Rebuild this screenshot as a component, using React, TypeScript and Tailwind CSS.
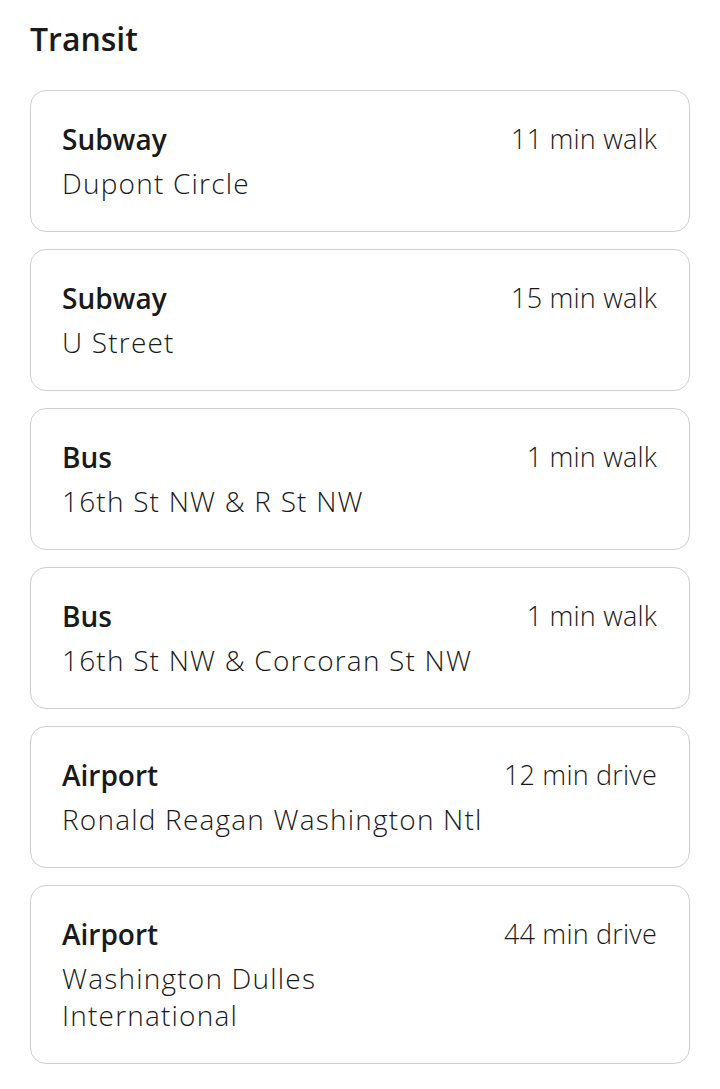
import React from "react";

const items = [
  { type: "Subway", name: "Dupont Circle", time: "11 min walk" },
  { type: "Subway", name: "U Street", time: "15 min walk" },
  { type: "Bus", name: "16th St NW & R St NW", time: "1 min walk" },
  { type: "Bus", name: "16th St NW & Corcoran St NW", time: "1 min walk" },
  { type: "Airport", name: "Ronald Reagan Washington Ntl", time: "12 min drive" },
  { type: "Airport", name: "Washington Dulles International", time: "44 min drive" },
];

export default function App() {
  return (
    <div
      className="min-h-[1089px] bg-white px-[30px] pt-[18px] text-[#1a1a1a]"
      style={{ fontFamily: "'Open Sans', Lato, sans-serif" }}
    >
      <h1 className="text-[32px] font-semibold leading-[42px]">Transit</h1>
      <div className="mt-[30px] flex flex-col gap-[17px]">
        {items.map((it, i) => (
          <div
            key={i}
            className="rounded-[16px] border-[1.5px] border-[#cfcfcf] pl-[31px] pr-[32px] pt-[30px] pb-[29px]"
          >
            <div className="flex items-start justify-between gap-[8px]">
              <div className="min-w-0 max-w-[432px]">
                <div className="text-[28px] font-semibold leading-[36px]">{it.type}</div>
                <div className="mt-[8px] text-[28px] font-light leading-[37px] tracking-[1.2px]">
                  {it.name}
                </div>
              </div>
              <div className="shrink-0 text-[27px] font-light leading-[36px] tracking-[0.2px]">
                {it.time}
              </div>
            </div>
          </div>
        ))}
      </div>
    </div>
  );
}
